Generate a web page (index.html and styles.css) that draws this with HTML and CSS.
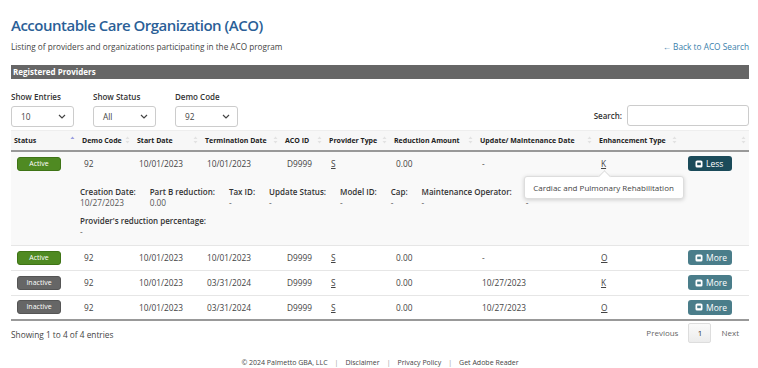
FILE: index.html
```html
<!DOCTYPE html>
<html>
<head>
<meta charset="utf-8">
<link rel="stylesheet" href="styles.css">
</head>
<body>
<div class="page">
  <h1 class="title">Accountable Care Organization (ACO)</h1>
  <div class="subrow">
    <p class="subtitle">Listing of providers and organizations participating in the ACO program</p>
    <a class="back" href="#">&larr; Back to ACO Search</a>
  </div>
  <div class="bar">Registered Providers</div>

  <div class="controls">
    <div class="filters">
      <div class="filter">
        <label>Show Entries</label>
        <div class="select"><span>10</span><svg width="8" height="5" viewBox="0 0 8 5"><path d="M1 1l3 3 3-3" fill="none" stroke="#444" stroke-width="1.2"/></svg></div>
      </div>
      <div class="filter">
        <label>Show Status</label>
        <div class="select"><span>All</span><svg width="8" height="5" viewBox="0 0 8 5"><path d="M1 1l3 3 3-3" fill="none" stroke="#444" stroke-width="1.2"/></svg></div>
      </div>
      <div class="filter">
        <label>Demo Code</label>
        <div class="select"><span>92</span><svg width="8" height="5" viewBox="0 0 8 5"><path d="M1 1l3 3 3-3" fill="none" stroke="#444" stroke-width="1.2"/></svg></div>
      </div>
    </div>
    <div class="search"><label>Search:</label><div class="input"></div></div>
  </div>

  <table class="grid">
    <colgroup>
      <col style="width:67px"><col style="width:55px"><col style="width:68px"><col style="width:80px"><col style="width:44px"><col style="width:65px"><col style="width:86px"><col style="width:119px"><col style="width:85px"><col style="width:69px">
    </colgroup>
    <thead>
      <tr>
        <th><div class="th"><span>Status</span><svg class="sort" width="5" height="8" viewBox="0 0 5 8"><path d="M2.5 0.5L4.5 3H0.5z" fill="#9a9ee0"/></svg></div></th>
        <th><div class="th"><span>Demo Code</span><svg class="sort" width="5" height="8" viewBox="0 0 5 8"><path d="M2.5 0.5L4.5 3H0.5z M2.5 7.5L4.5 5H0.5z" fill="#e2e2e2"/></svg></div></th>
        <th><div class="th"><span>Start Date</span><svg class="sort" width="5" height="8" viewBox="0 0 5 8"><path d="M2.5 0.5L4.5 3H0.5z M2.5 7.5L4.5 5H0.5z" fill="#e2e2e2"/></svg></div></th>
        <th><div class="th"><span>Termination Date</span><svg class="sort" width="5" height="8" viewBox="0 0 5 8"><path d="M2.5 0.5L4.5 3H0.5z M2.5 7.5L4.5 5H0.5z" fill="#e2e2e2"/></svg></div></th>
        <th><div class="th"><span>ACO ID</span><svg class="sort" width="5" height="8" viewBox="0 0 5 8"><path d="M2.5 0.5L4.5 3H0.5z M2.5 7.5L4.5 5H0.5z" fill="#e2e2e2"/></svg></div></th>
        <th><div class="th"><span>Provider Type</span><svg class="sort" width="5" height="8" viewBox="0 0 5 8"><path d="M2.5 0.5L4.5 3H0.5z M2.5 7.5L4.5 5H0.5z" fill="#e2e2e2"/></svg></div></th>
        <th><div class="th"><span>Reduction Amount</span><svg class="sort" width="5" height="8" viewBox="0 0 5 8"><path d="M2.5 0.5L4.5 3H0.5z M2.5 7.5L4.5 5H0.5z" fill="#e2e2e2"/></svg></div></th>
        <th><div class="th"><span>Update/ Maintenance Date</span><svg class="sort" width="5" height="8" viewBox="0 0 5 8"><path d="M2.5 0.5L4.5 3H0.5z M2.5 7.5L4.5 5H0.5z" fill="#e2e2e2"/></svg></div></th>
        <th><div class="th"><span>Enhancement Type</span><svg class="sort" width="5" height="8" viewBox="0 0 5 8"><path d="M2.5 0.5L4.5 3H0.5z M2.5 7.5L4.5 5H0.5z" fill="#e2e2e2"/></svg></div></th>
        <th><div class="th"><span></span><svg class="sort" width="5" height="8" viewBox="0 0 5 8"><path d="M2.5 0.5L4.5 3H0.5z M2.5 7.5L4.5 5H0.5z" fill="#e2e2e2"/></svg></div></th>
      </tr>
    </thead>
    <tbody>
      <tr class="open">
        <td><span class="badge active">Active</span></td>
        <td>92</td>
        <td>10/01/2023</td>
        <td>10/01/2023</td>
        <td>D9999</td>
        <td><a class="code" href="#">S</a></td>
        <td>0.00</td>
        <td>-</td>
        <td><span class="tipwrap"><a class="code" href="#">K</a><span class="tooltip">Cardiac and Pulmonary Rehabilitation</span></span></td>
        <td><span class="btn less"><svg width="8" height="8" viewBox="0 0 8 8"><rect x="0.5" y="0.5" width="7" height="7" rx="1.6" fill="#fff"/><rect x="2.2" y="2.6" width="3.6" height="2.6" fill="#1b4b5a"/></svg>Less</span></td>
      </tr>
      <tr class="open detail">
        <td></td>
        <td colspan="9">
          <div class="details">
            <div class="field"><div class="fl">Creation Date:</div><div class="fv">10/27/2023</div></div>
            <div class="field"><div class="fl">Part B reduction:</div><div class="fv">0.00</div></div>
            <div class="field"><div class="fl">Tax ID:</div><div class="fv">-</div></div>
            <div class="field"><div class="fl">Update Status:</div><div class="fv">-</div></div>
            <div class="field"><div class="fl">Model ID:</div><div class="fv">-</div></div>
            <div class="field"><div class="fl">Cap:</div><div class="fv">-</div></div>
            <div class="field"><div class="fl">Maintenance Operator:</div><div class="fv">-</div></div>
            <div class="field"><div class="fl">&nbsp;</div><div class="fv">-</div></div>
          </div>
          <div class="field wide"><div class="fl">Provider's reduction percentage:</div><div class="fv">-</div></div>
        </td>
      </tr>
      <tr>
        <td><span class="badge active">Active</span></td>
        <td>92</td>
        <td>10/01/2023</td>
        <td>10/01/2023</td>
        <td>D9999</td>
        <td><a class="code" href="#">S</a></td>
        <td>0.00</td>
        <td>-</td>
        <td><a class="code" href="#">O</a></td>
        <td><span class="btn more"><svg width="8" height="8" viewBox="0 0 8 8"><rect x="0.5" y="0.5" width="7" height="7" rx="1.6" fill="#fff"/><rect x="2.2" y="2.6" width="3.6" height="2.6" fill="#4a7d8a"/></svg>More</span></td>
      </tr>
      <tr>
        <td><span class="badge inactive">Inactive</span></td>
        <td>92</td>
        <td>10/01/2023</td>
        <td>03/31/2024</td>
        <td>D9999</td>
        <td><a class="code" href="#">S</a></td>
        <td>0.00</td>
        <td>10/27/2023</td>
        <td><a class="code" href="#">K</a></td>
        <td><span class="btn more"><svg width="8" height="8" viewBox="0 0 8 8"><rect x="0.5" y="0.5" width="7" height="7" rx="1.6" fill="#fff"/><rect x="2.2" y="2.6" width="3.6" height="2.6" fill="#4a7d8a"/></svg>More</span></td>
      </tr>
      <tr>
        <td><span class="badge inactive">Inactive</span></td>
        <td>92</td>
        <td>10/01/2023</td>
        <td>03/31/2024</td>
        <td>D9999</td>
        <td><a class="code" href="#">S</a></td>
        <td>0.00</td>
        <td>10/27/2023</td>
        <td><a class="code" href="#">O</a></td>
        <td><span class="btn more"><svg width="8" height="8" viewBox="0 0 8 8"><rect x="0.5" y="0.5" width="7" height="7" rx="1.6" fill="#fff"/><rect x="2.2" y="2.6" width="3.6" height="2.6" fill="#4a7d8a"/></svg>More</span></td>
      </tr>
    </tbody>
  </table>

  <div class="tablefoot">
    <div class="info">Showing 1 to 4 of 4 entries</div>
    <div class="pager"><span class="pg">Previous</span><span class="pg cur">1</span><span class="pg">Next</span></div>
  </div>

  <div class="footer">
    <span>&copy; 2024 Palmetto GBA, LLC</span><span class="sep">|</span><a href="#">Disclaimer</a><span class="sep">|</span><a href="#">Privacy Policy</a><span class="sep">|</span><a href="#">Get Adobe Reader</a>
  </div>
</div>
</body>
</html>
```

FILE: styles.css
```css
* { box-sizing: border-box; }
html, body { margin: 0; padding: 0; background: #fff; }
body {
  font-family: "Open Sans", "Noto Sans", "Liberation Sans", sans-serif;
  color: #333;
  font-size: 8px;
}
.page { padding: 0 9px 0 11px; }
a { color: inherit; text-decoration: none; }

.title {
  margin: 0;
  padding-top: 14px;
  font-size: 15px;
  line-height: 22px;
  font-weight: 600;
  color: #2b5f97;
  letter-spacing: -0.5px;
}
.subrow {
  display: flex;
  justify-content: space-between;
  align-items: baseline;
  margin-top: 5px;
  height: 15px;
}
.subtitle { margin: 0; font-size: 8.2px; color: #444; }
.back { font-size: 8.3px; color: #3a80ab; }

.bar {
  margin-top: 9px;
  background: #666;
  color: #fff;
  font-weight: 700;
  font-size: 8px;
  height: 14px;
  line-height: 14px;
  padding-left: 2px;
}

.controls {
  display: flex;
  justify-content: space-between;
  align-items: flex-end;
  margin-top: 12px;
  height: 36px;
}
.filters { display: flex; gap: 19px; }
.filter label { display: block; font-weight: 600; color: #333; font-size: 8px; line-height: 11px; margin-bottom: 4px; }
.select {
  width: 63px;
  height: 21px;
  border: 1px solid #ccc;
  border-radius: 3px;
  display: flex;
  align-items: center;
  justify-content: space-between;
  padding: 0 7px 0 9px;
  color: #444;
  font-size: 8.3px;
}
.search { display: flex; align-items: center; gap: 5px; margin-bottom: 1px; }
.search label { font-weight: 600; font-size: 8px; }
.search .input { width: 122px; height: 21px; border: 1px solid #ccc; border-radius: 3px; }

.grid {
  width: 738px;
  table-layout: fixed;
  border-collapse: collapse;
  margin-top: 3px;
  border-top: 1px solid #eee;
}
.grid th {
  background: #f7f7f7;
  font-size: 7px;
  font-weight: 700;
  color: #222;
  text-align: left;
  height: 20px;
  padding: 0 3px 0 4px;
  border-bottom: 2px solid #999;
}
.grid th:first-child { padding-left: 3px; }
.th { display: flex; justify-content: space-between; align-items: center; white-space: nowrap; }
.sort { flex: none; }
.grid td {
  font-size: 8.3px;
  color: #444;
  height: 25px;
  padding: 0 3px 0 6px;
  border-top: 1px solid #e6e6e6;
  white-space: nowrap;
  vertical-align: middle;
}
.grid tr.open td { background: #f9f9f9; }
.grid tr.detail td { border-top: none; height: auto; vertical-align: top; padding-top: 10px; padding-bottom: 8px; }
.grid tr.detail td:nth-child(2) { padding-left: 2px; }
.grid tbody tr:last-child td { border-bottom: 2px solid #999; }

.badge {
  display: inline-block;
  width: 44px;
  height: 14px;
  line-height: 12px;
  text-align: center;
  color: #fff;
  font-size: 7px;
  border-radius: 3px;
}
.badge.active { background: #4f8a22; border: 1px solid #3f7416; }
.badge.inactive { background: #666; border: 1px solid #555; }

.code { text-decoration: underline; color: #444; }

.btn {
  display: inline-flex;
  align-items: center;
  gap: 3px;
  width: 44px;
  height: 15px;
  border-radius: 3px;
  color: #fff;
  font-size: 8.5px;
  padding-left: 7px;
  margin-left: 2px;
}
.btn.less { background: #1b4b5a; }
.btn.more { background: #4a7d8a; }

.tipwrap { position: relative; display: inline-block; }
.tooltip {
  position: absolute;
  top: 18px;
  left: 50%;
  transform: translateX(-50%);
  width: 160px;
  height: 23px;
  line-height: 21px;
  background: #fff;
  border: 1px solid #ddd;
  border-radius: 3px;
  box-shadow: 0 1px 4px rgba(0,0,0,0.18);
  text-align: center;
  font-size: 8px;
  color: #444;
  z-index: 5;
}
.tooltip::before {
  content: "";
  position: absolute;
  top: -5px;
  left: 50%;
  width: 8px;
  height: 8px;
  margin-left: -4px;
  background: #fff;
  border-left: 1px solid #ddd;
  border-top: 1px solid #ddd;
  transform: rotate(45deg);
}

.details { display: flex; gap: 14px; }
.field { line-height: 11px; }
.fl { color: #333; font-weight: 600; font-size: 8px; }
.fv { color: #555; font-size: 8.3px; }
.field.wide { margin-top: 7px; }

.tablefoot { display: flex; justify-content: space-between; align-items: center; margin-top: 1px; height: 21px; }
.info { font-size: 8.3px; color: #444; padding-top: 3px; }
.pager { display: flex; align-items: center; }
.pg { font-size: 8px; color: #666; padding: 0 10px; }
.pg.cur {
  width: 23px; height: 20px; line-height: 18px; text-align: center; padding: 0;
  border: 1px solid #ddd; border-radius: 2px; background: linear-gradient(#fafafa, #ececec); color: #333;
}

.footer {
  text-align: center;
  font-size: 7px;
  color: #444;
  margin-top: 15px;
}
.footer .sep { color: #999; margin: 0 7px; }
```
